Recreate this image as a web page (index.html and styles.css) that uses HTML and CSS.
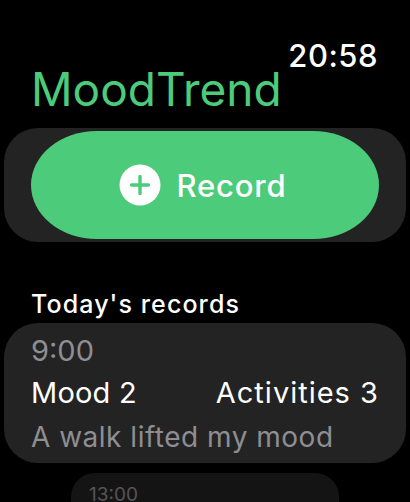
FILE: index.html
```html
<!DOCTYPE html>
<html lang="en">

<head>
    <meta charset="UTF-8">
    <meta name="viewport" content="width=device-width, initial-scale=1.0">
    <title>MoodTrend</title>
    <link rel="stylesheet" href="styles.css">
</head>

<body>
    <div class="watch-screen">
        <div class="status-bar">20:58</div>
        <h1 class="app-title">MoodTrend</h1>

        <div class="record-panel">
            <button class="record-btn">
                <svg class="plus-icon" viewBox="0 0 42 42" width="42" height="42">
                    <circle cx="21" cy="21" r="20.5" fill="#fff" />
                    <path d="M21 12.5v17M12.5 21h17" stroke="#4ccb7a" stroke-width="3.4" stroke-linecap="round" />
                </svg>
                <span>Record</span>
            </button>
        </div>

        <h2 class="section-title">Today's records</h2>

        <div class="record-card">
            <p class="record-time">9:00</p>
            <div class="record-stats">
                <span class="stat-mood">Mood 2</span>
                <span class="stat-activities">Activities 3</span>
            </div>
            <p class="record-note">A walk lifted my mood</p>
        </div>

        <div class="record-card-next">
            <p class="record-time-next">13:00</p>
        </div>
    </div>
</body>

</html>
```

FILE: styles.css
```css
* {
    box-sizing: border-box;
}

html,
body {
    margin: 0;
    height: 100%;
    background: #000;
    overflow: hidden;
}

.watch-screen {
    height: 502px;
    overflow: hidden;
    padding: 40px 4px 0;
    font-family: "Inter", "Liberation Sans", sans-serif;
    color: #fff;
}

.status-bar {
    height: 30px;
    line-height: 32px;
    padding-right: 28px;
    text-align: right;
    font-size: 31px;
    font-weight: 500;
    letter-spacing: 0.5px;
}

.app-title {
    margin: 0 0 20px;
    height: 38px;
    line-height: 38px;
    padding-left: 27px;
    font-size: 46px;
    font-weight: 400;
    color: #4ccb7a;
}

.record-panel {
    height: 114px;
    padding: 3px 27px;
    background: #232323;
    border-radius: 34px;
}

.record-btn {
    width: 100%;
    height: 108px;
    display: flex;
    align-items: center;
    justify-content: center;
    gap: 16px;
    border: none;
    border-radius: 66px / 54px;
    background: #4ccb7a;
    color: #fff;
    font-family: inherit;
    font-size: 31px;
    font-weight: 500;
    letter-spacing: 0.8px;
    padding: 0 5px 0 0;
}

.section-title {
    margin: 45px 0 2px;
    height: 34px;
    line-height: 34px;
    padding-left: 27px;
    font-size: 25px;
    font-weight: 500;
    letter-spacing: 1.1px;
}

.record-card {
    height: 140px;
    padding: 10px 27px 0;
    background: #232323;
    border-radius: 34px;
}

.record-time {
    margin: 0;
    height: 36px;
    line-height: 36px;
    font-size: 29px;
    color: #8e8e93;
}

.record-stats {
    display: flex;
    justify-content: space-between;
    height: 48px;
    line-height: 48px;
    font-size: 29px;
}

.stat-mood {
    letter-spacing: 0.2px;
}

.stat-activities {
    letter-spacing: 1px;
}

.record-note {
    margin: 0;
    height: 40px;
    line-height: 40px;
    font-size: 28px;
    letter-spacing: 0.5px;
    color: #8e8e93;
}

.record-card-next {
    width: 268px;
    height: 60px;
    margin: 10px auto 0;
    padding: 10px 18px 0;
    background: #141414;
    border-radius: 24px;
}

.record-time-next {
    margin: 0;
    font-size: 19px;
    line-height: 24px;
    color: #555558;
}
```
